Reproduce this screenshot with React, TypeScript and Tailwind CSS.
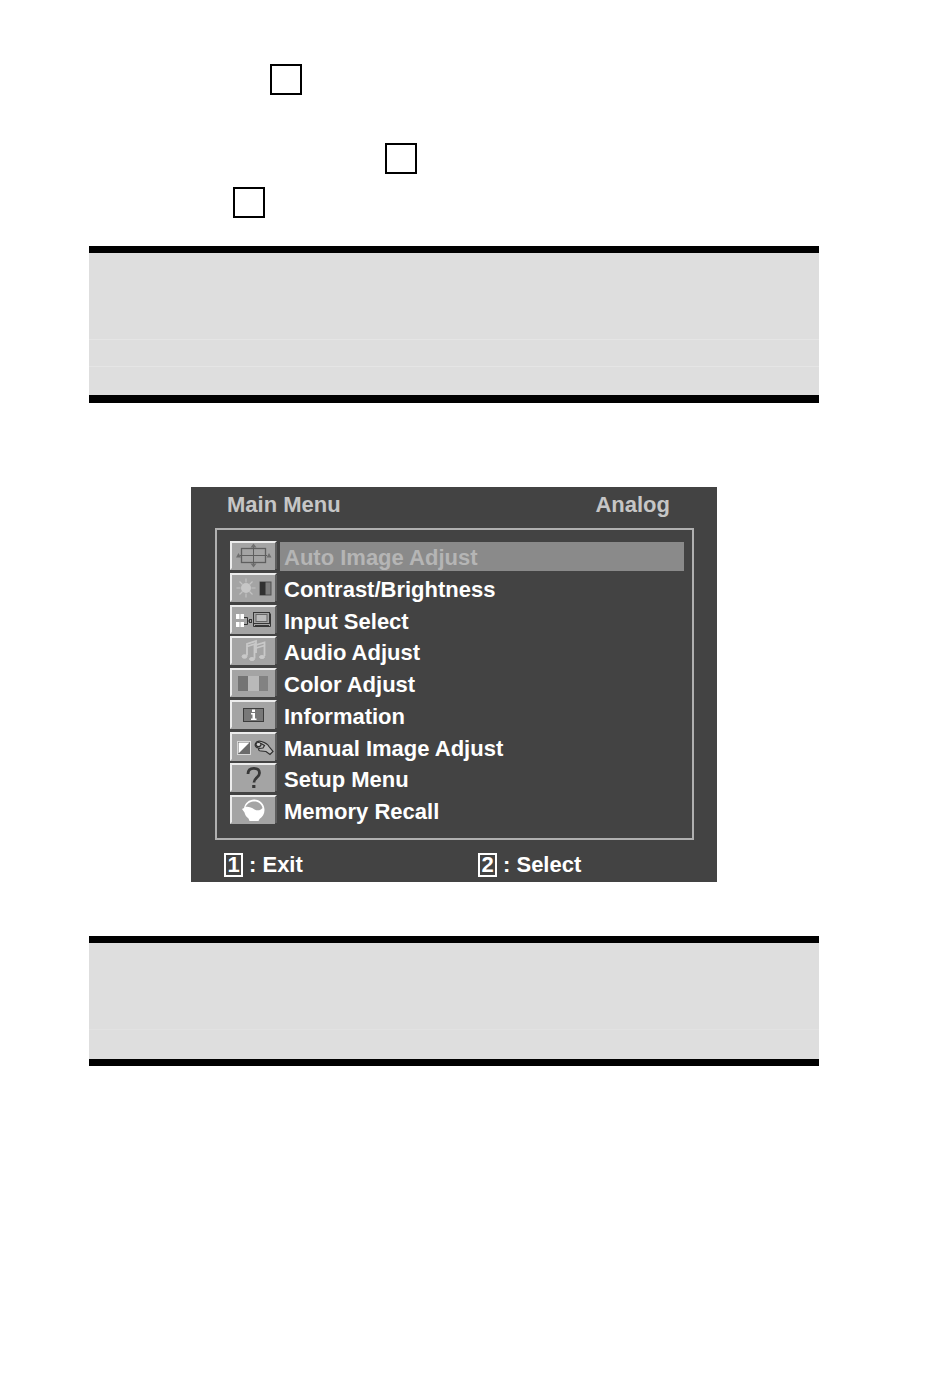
import type { ReactNode } from 'react';

interface MenuItem {
  label: string;
  icon: ReactNode;
}

const items: MenuItem[] = [
  {
    label: 'Auto Image Adjust',
    icon: (
      <g fill="none" stroke="#5f5f5f">
        <rect x="11.5" y="7.5" width="24" height="14" strokeWidth="1.3" />
        <path d="M23.5 6v17M10 14.5h27" />
        <path
          d="M23.5 2.5l3 4h-6zM23.5 26.5l3-4h-6zM6 16.5l2.5-4.5 2.5 4.5zM36.5 16.5l2.5-4.5 2.5 4.5z"
          fill="#6f6f6f"
          stroke="none"
        />
      </g>
    ),
  },
  {
    label: 'Contrast/Brightness',
    icon: (
      <>
        <circle cx="16" cy="15" r="5" fill="#c6c6c6" />
        <path
          d="M16 5.5v4M16 20.5v4M6.5 15h4M21.5 15h4M9.5 8.5l3 3M19.5 18.5l3 3M9.5 21.5l3-3M19.5 11.5l3-3"
          stroke="#c2c2c2"
          strokeWidth="1.2"
        />
        <rect x="30" y="9" width="11" height="13" fill="#7b7b7b" stroke="#505050" />
        <rect x="30" y="9" width="5.5" height="13" fill="#303030" />
      </>
    ),
  },
  {
    label: 'Input Select',
    icon: (
      <>
        <path d="M6 9h3.5v5H6zM10.5 9H14v5h-3.5zM6 17h3.5v5H6zM10.5 17H14v5h-3.5z" fill="#fff" />
        <g fill="none" stroke="#353535">
          <path d="M14 12.5h3.5v7H14M17.5 16h2" />
          <rect x="19.5" y="14.5" width="2" height="3" />
          <rect x="23.5" y="7.5" width="16" height="11" />
          <rect x="26" y="9.5" width="11" height="7" fill="#bcbcbc" stroke="#666666" />
          <path d="M23.5 18.5v3h17v-13M25 20.5h14" />
        </g>
      </>
    ),
  },
  {
    label: 'Audio Adjust',
    icon: (
      <g stroke="#c9c9c9" fill="#c9c9c9">
        <path d="M17 19.5V8l9-3v12M17 10.5l9-3" fill="none" strokeWidth="1.8" />
        <path d="M24.5 22.5V9.5l10-3v13.5M24.5 12.5l10-3" fill="none" strokeWidth="1.8" />
        <ellipse cx="14.5" cy="20.5" rx="2.5" ry="1.8" />
        <ellipse cx="22" cy="23" rx="2.5" ry="1.5" />
        <ellipse cx="32" cy="21" rx="2.5" ry="1.5" />
      </g>
    ),
  },
  {
    label: 'Color Adjust',
    icon: (
      <>
        <rect x="8" y="8" width="10" height="15" fill="#747474" />
        <rect x="18" y="8" width="11" height="15" fill="#b9b9b9" />
        <rect x="29" y="8" width="9" height="15" fill="#828282" />
      </>
    ),
  },
  {
    label: 'Information',
    icon: (
      <>
        <rect x="13.5" y="8.5" width="20" height="13" fill="#787878" stroke="#3c3c3c" />
        <path d="M22 9.500h3v2.500h-3zM21 13h4v5.500h1.500V20H21v-1.500h1.500v-4H21z" fill="#fff" />
      </>
    ),
  },
  {
    label: 'Manual Image Adjust',
    icon: (
      <>
        <rect x="7.5" y="9.5" width="13" height="13" fill="#6a6a6a" stroke="#d8d8d8" />
        <path d="M8.5 21.5v-11h11z" fill="#fff" />
        <g fill="#b8b8b8" stroke="#303030" strokeWidth="1.2">
          <path d="M29 16c-3 0-4.500-2-3.500-4.500s4-2.500 6-2c3 1 6 2 7.500 5l4 5-3 3-4-3-5-.5c-2 0-3-1-2-3z" />
          <ellipse cx="28.500" cy="12.500" rx="2.500" ry="2" fill="#d0d0d0" />
          <path d="M31 11.500l3.500 2-1.500 2.500-4 .5" fill="none" />
        </g>
      </>
    ),
  },
  {
    label: 'Setup Menu',
    icon: (
      <>
        <path
          d="M18 11c0-4 2.500-5.600 5.800-5.600s5.700 1.600 5.700 4.600c0 4.500-5.500 4.500-5.500 9.500"
          fill="none"
          stroke="#383838"
          strokeWidth="2.8"
        />
        <rect x="22.2" y="22" width="3.2" height="3" fill="#383838" />
      </>
    ),
  },
  {
    label: 'Memory Recall',
    icon: (
      <>
        <path d="M12 14l2-1c1-5 5-8.500 10-8.500 6 0 10.500 4.500 10.500 10.500 0 4-2 7-5 9l-1 2h-9l-1-2.500c-2-1.500-3.500-3.500-4-6z" fill="#fff" />
        <path d="M15.500 12c2-4 5-5.500 9-5.500 4 0 7 2.500 8 6.500-2 2.500-5 3-8 1.500-3-2-6-3-9-2.500z" fill="#a4a4a4" />
      </>
    ),
  },
];

function MenuIcon({ children }: { children: ReactNode }) {
  return (
    <svg viewBox="0 0 48 30" className="h-[30px] w-12 shrink-0" aria-hidden="true">
      <path d="M44 2h3v26h-3z" fill="#5e5e5e" />
      <rect width="45" height="29" fill="#a4a4a4" />
      <path d="M0 29V0h47l-2 2H2v25z" fill="#ececec" />
      {children}
    </svg>
  );
}

function KeyBox({ className }: { className: string }) {
  return <div className={`h-[31px] w-8 border-2 border-black ${className}`} />;
}

function KeyHint({ keyName, action }: { keyName: string; action: string }) {
  return (
    <button className="flex items-center text-left">
      <span className="mr-1.5 flex h-6 w-[19px] items-center justify-center border-2 border-white">
        {keyName}
      </span>
      : {action}
    </button>
  );
}

function OsdMenu() {
  return (
    <section className="mx-auto mt-[84px] max-w-[526px] bg-[#434343] pr-[23px] pl-6 text-[22px] leading-6 font-bold text-white">
      <header className="flex h-[41px] items-center justify-between pr-6 pb-1.5 pl-3 text-[#c6c6c6]">
        <h1>Main Menu</h1>
        <span>Analog</span>
      </header>

      <nav className="border-2 border-[#b0b0b0] pt-[11px] pr-2 pb-[11px] pl-[13px]">
        <ul className="grid h-[286px] grid-rows-9">
          {items.map((item, i) => (
            <li key={item.label} className="min-h-0">
              <button className="flex w-full items-start gap-0.5 text-left">
                <MenuIcon>{item.icon}</MenuIcon>
                <span
                  className={
                    i === 0
                      ? 'mt-px h-[29px] flex-1 bg-[#8a8a8a] pt-1 pl-1 text-[#b5b5b5]'
                      : 'mt-px h-[29px] flex-1 pt-1 pl-1'
                  }
                >
                  {item.label}
                </span>
              </button>
            </li>
          ))}
        </ul>
      </nav>

      <footer className="grid h-[42px] grid-cols-[254px_1fr] items-center pt-2 pl-[9px]">
        <KeyHint keyName="1" action="Exit" />
        <KeyHint keyName="2" action="Select" />
      </footer>
    </section>
  );
}

export default function App() {
  return (
    <main className="min-h-screen bg-white pt-16 pr-[131px] pb-16 pl-[89px] font-['Liberation_Sans',Arial,sans-serif]">
      <KeyBox className="ml-[181px]" />
      <KeyBox className="mt-12 ml-[296px]" />
      <KeyBox className="mt-[13px] ml-36" />

      {/* Empty table, three rows */}
      <div className="mt-7 divide-y divide-[#e5e5e5] border-t-[7px] border-b-8 border-black bg-[#dedede]">
        <div className="h-[87px]" />
        <div className="h-[27px]" />
        <div className="h-7" />
      </div>

      <OsdMenu />

      {/* Empty table, two rows */}
      <div className="mt-[54px] divide-y divide-[#e2e2e2] border-y-[7px] border-black bg-[#dedede]">
        <div className="h-[87px]" />
        <div className="h-[29px]" />
      </div>
    </main>
  );
}
